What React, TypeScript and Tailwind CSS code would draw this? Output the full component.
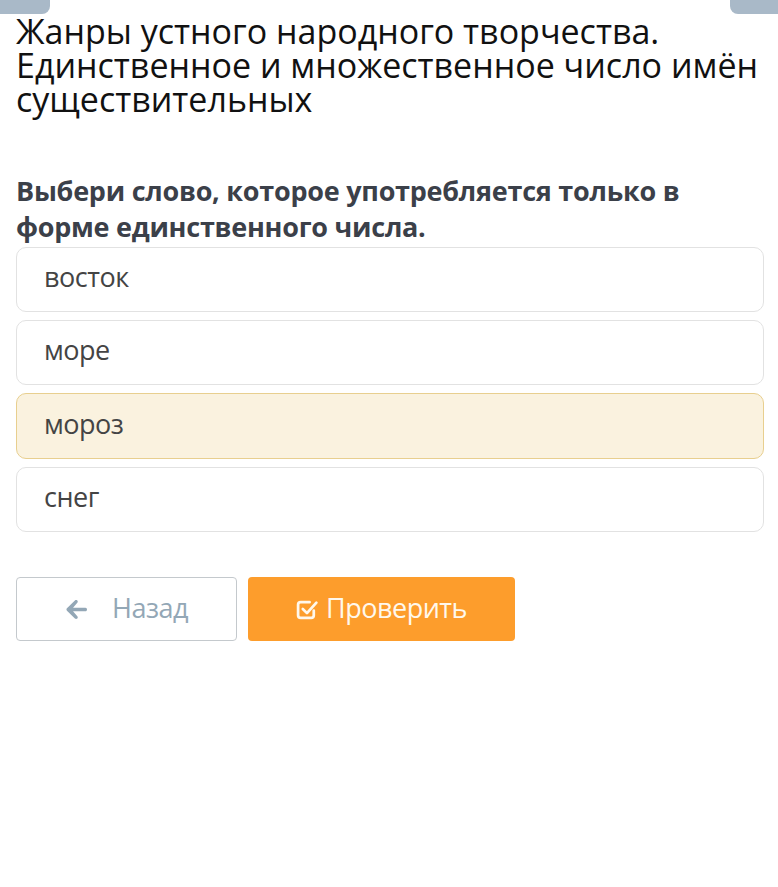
export default function App() {
  const options = [
    { label: "восток", active: false },
    { label: "море", active: false },
    { label: "мороз", active: true },
    { label: "снег", active: false },
  ];

  return (
    <main className="min-h-[887px] bg-white font-['Open_Sans',sans-serif]">
      <div className="flex justify-between">
        <div className="h-[14px] w-[50px] rounded-br-lg bg-[#a9b9c8]" />
        <div className="h-[14px] w-[48px] rounded-bl-lg bg-[#a9b9c8]" />
      </div>

      <div className="pl-4 pr-[14px]">
        <h1 className="text-[34px] leading-[34px] text-[#111] font-normal">
          Жанры устного народного творчества. Единственное и множественное число имён существительных
        </h1>

        <p className="mt-[57px] text-[27px] leading-[36px] font-bold tracking-[-0.25px] text-[#3b4049]">
          Выбери слово, которое употребляется только в форме единственного числа.
        </p>

        <div className="mt-[2px] flex flex-col gap-2">
          {options.map((o) => (
            <div
              key={o.label}
              className={
                o.active
                  ? "flex h-[66px] items-center rounded-[10px] border border-[#e8cf8f] bg-[#faf2df] pl-[27px] text-[27px] text-[#444] tracking-[-0.5px]"
                  : "flex h-[65px] items-center rounded-[10px] border border-[#e2e2e2] bg-white pl-[27px] text-[27px] text-[#444] tracking-[-0.5px]"
              }
            >
              <span className="-mt-[4px]">{o.label}</span>
            </div>
          ))}
        </div>

        <div className="mt-[45px] flex gap-[11px]">
          <button className="flex h-[64px] w-[221px] items-center justify-center gap-[24px] rounded-[4px] border border-[#c4c9cd] bg-white text-[27px] text-[#93a7b6] tracking-[-0.5px]">
            <svg width="23" height="21" viewBox="0 0 448 448" fill="#93a7b6">
              <path d="M20 198c-14 14-14 38 0 52l170 168c14 14 37 14 51 0s14-37 0-51L150 262h264c20 0 34-16 34-38s-14-38-34-38H150l91-105c14-14 14-37 0-51s-37-14-51 0L20 198z" />
            </svg>
            <span className="-mt-[2px]">Назад</span>
          </button>
          <button className="flex h-[64px] w-[267px] items-center justify-center gap-[7px] rounded-[4px] bg-[#fd9d2c] text-[27px] text-[#fff8ec] tracking-[-0.5px]">
            <svg width="23" height="23" viewBox="0 0 22 22" fill="none" stroke="#fff8ec" strokeWidth="2.6">
              <path d="M17 12v4.5a2.5 2.5 0 0 1-2.5 2.5h-10A2.5 2.5 0 0 1 2 16.5v-10A2.5 2.5 0 0 1 4.5 4H13" strokeLinecap="round" />
              <path d="M6.5 10.5l4 4 9-10" strokeLinecap="round" strokeLinejoin="round" />
            </svg>
            <span className="-mt-[2px]">Проверить</span>
          </button>
        </div>
      </div>
    </main>
  );
}
